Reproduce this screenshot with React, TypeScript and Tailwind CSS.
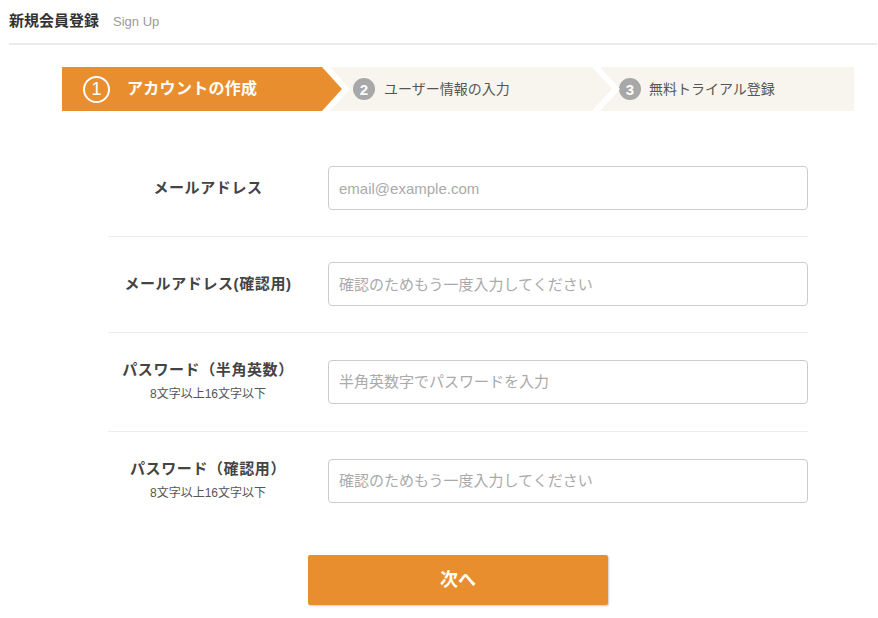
// 新規会員登録 — ステップ1: アカウントの作成

const FONT = "font-['Liberation_Sans','Noto_Sans_CJK_JP',sans-serif]";

type Field = {
  label: string;
  note?: string;
  placeholder: string;
};

const FIELDS: Field[] = [
  { label: "メールアドレス", placeholder: "email@example.com" },
  { label: "メールアドレス(確認用)", placeholder: "確認のためもう一度入力してください" },
  {
    label: "パスワード（半角英数）",
    note: "8文字以上16文字以下",
    placeholder: "半角英数字でパスワードを入力",
  },
  {
    label: "パスワード（確認用）",
    note: "8文字以上16文字以下",
    placeholder: "確認のためもう一度入力してください",
  },
];

function Stepper() {
  return (
    <div className="flex h-[44px]">
      <div className="flex items-center w-[280px] shrink-0 bg-[#e98e2e] pl-[21px] [clip-path:polygon(0_0,260px_0,280px_50%,260px_100%,0_100%)]">
        <span className="flex items-center justify-center w-[27px] h-[27px] rounded-full border-[2.5px] border-white text-white text-[18px] leading-none">
          1
        </span>
        <span className="ml-[17px] text-white text-[16px] font-bold tracking-[0.3px]">アカウントの作成</span>
      </div>
      <div className="flex items-center w-[282px] shrink-0 -ml-[12px] bg-[#f7f5ee] pl-[23px] [clip-path:polygon(0_0,262px_0,282px_50%,262px_100%,0_100%,20px_50%)]">
        <span className="flex items-center justify-center w-[22px] h-[22px] rounded-full bg-[#a8a8a8] text-white text-[15px] font-bold leading-none">
          2
        </span>
        <span className="ml-[9px] text-[#555] text-[14px]">ユーザー情報の入力</span>
      </div>
      <div className="flex items-center w-[254px] shrink-0 -ml-[12px] bg-[#f7f5ee] pl-[19px] [clip-path:polygon(0_0,100%_0,100%_100%,0_100%,20px_50%)]">
        <span className="flex items-center justify-center w-[22px] h-[22px] rounded-full bg-[#a8a8a8] text-white text-[15px] font-bold leading-none">
          3
        </span>
        <span className="ml-[8px] text-[#555] text-[14px]">無料トライアル登録</span>
      </div>
    </div>
  );
}

export default function App() {
  return (
    <div className={`${FONT} bg-white w-[878px] min-h-[618px] text-[#333]`}>
      <div className="ml-[9px] mr-[1px] h-[45px] flex items-center border-b-2 border-[#ebebeb]">
        <h1 className="text-[15px] font-bold text-[#333]">新規会員登録</h1>
        <span className="ml-[14px] text-[13px] text-[#999]">Sign Up</span>
      </div>

      <div className="ml-[62px] w-[792px] mt-[22px]">
        <Stepper />

        <form className="w-[700px] mx-auto mt-[30px]" onSubmit={(e) => e.preventDefault()}>
          {FIELDS.map((f, i) => (
            <div
              key={f.label}
              className={[
                "flex items-center pt-[25px] pb-[26px]",
                i < FIELDS.length - 1 ? "border-b border-[#ececec]" : "",
              ].join(" ")}
            >
              <div className="w-[200px] shrink-0 text-center">
                <div className="text-[15px] font-bold text-[#444] tracking-[0.6px] leading-[24px]">{f.label}</div>
                {f.note && <div className="mt-[1px] text-[12px] text-[#555] leading-[22px]">{f.note}</div>}
              </div>
              <input
                type="text"
                placeholder={f.placeholder}
                className="ml-[20px] w-[480px] h-[44px] px-[10px] border border-[#cbcbcb] rounded-[4px] text-[15px] text-[#333] placeholder:text-[#aaa] outline-none"
              />
            </div>
          ))}

          <button
            type="submit"
            className="block mx-auto mt-[25px] w-[300px] h-[50px] rounded-[2px] bg-[#e98e2e] text-white text-[18px] font-bold shadow-[1px_1px_2px_rgba(0,0,0,0.2)]"
          >
            次へ
          </button>
        </form>
      </div>
    </div>
  );
}
